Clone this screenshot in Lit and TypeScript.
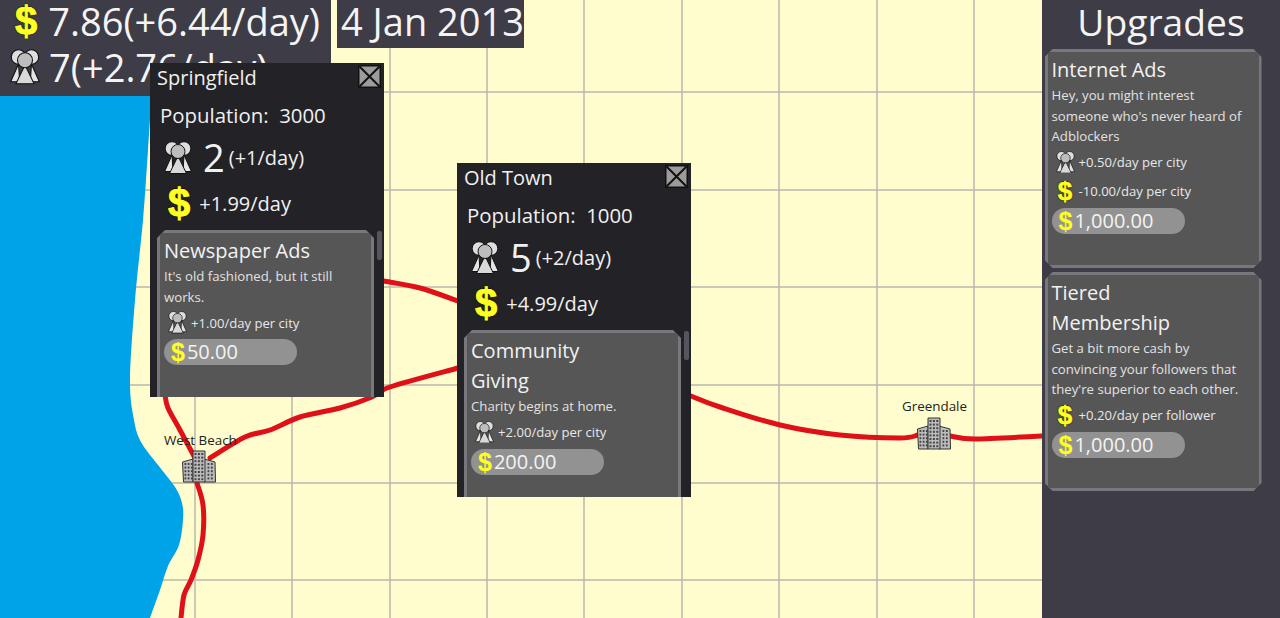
import { LitElement, html, css, svg } from "lit";
import { customElement } from "lit/decorators.js";

const people = (w: number) => html`<svg class="ico" width=${w} height=${w * 33 / 28} viewBox="0 0 28 33">
  <g fill="#cfcfcf" stroke="#111" stroke-width="1" stroke-linejoin="round">
    <circle cx="8" cy="7.5" r="6.8" fill="#dedede" /><circle cx="20" cy="7.5" r="6.8" fill="#dedede" />
    <path d="M8 14 L.6 30.5 H9 Z" fill="#e4e4e4" /><path d="M20 14 L27.4 30.5 H19 Z" fill="#e4e4e4" />
    <path d="M14 15 L5.5 32.5 H22.5 Z" fill="#d8d8d8" />
    <circle cx="14" cy="10.5" r="7" fill="#bdbdbd" />
  </g></svg>`;

const W = 1042, H = 618;
const gridX = [195, 292, 390, 487, 584, 682, 779, 877, 974];
const gridY = [92, 190, 287, 385, 483, 580];

/* Catmull-Rom through points, so the coast and the roads run as hand-drawn curves */
const smooth = (p: number[][]) => {
  let d = `M${p[0][0]} ${p[0][1]}`;
  for (let i = 0; i < p.length - 1; i++) {
    const a = p[Math.max(i - 1, 0)], b = p[i], c = p[i + 1], e = p[Math.min(i + 2, p.length - 1)];
    d += ` C${b[0] + (c[0] - a[0]) / 6} ${b[1] + (c[1] - a[1]) / 6} ${c[0] - (e[0] - b[0]) / 6} ${c[1] - (e[1] - b[1]) / 6} ${c[0]} ${c[1]}`;
  }
  return d;
};

const coast = smooth([[152, 90], [148, 150], [143, 220], [135, 300], [130, 380], [134, 420], [141, 442], [158, 465], [175, 487], [182, 503], [183, 520], [179, 545], [168, 566], [160, 590], [150, 618]]);

const roads = [
  [[165, 395], [168, 408], [180, 430], [195, 458]],
  [[197, 483], [203, 505], [203, 535], [198, 560], [191, 580], [184, 595], [181, 618]],
  [[210, 458], [245, 437], [270, 430], [300, 417], [340, 408], [372, 397], [390, 387], [458, 368]],
  [[384, 281], [420, 288], [458, 301]],
  [[691, 396], [720, 407], [780, 425], [840, 435], [900, 438], [918, 435]],
  [[950, 436], [975, 439], [1042, 436]],
];

const building = (x: number, y: number) => {
  const wins = [];
  for (let r = 0; r < 8; r++) for (let c = 0; c < 3; c++) wins.push(svg`<rect x=${x + 12.5 + c * 3.4} y=${y + 3 + r * 3.6} width="2" height="2" fill="#444" />`);
  for (let r = 0; r < 5; r++) for (let c = 0; c < 3; c++) {
    wins.push(svg`<rect x=${x + 2.5 + c * 3.2} y=${y + 13 + r * 3.6} width="1.8" height="2" fill="#444" />`);
    if (c < 2) wins.push(svg`<rect x=${x + 25.5 + c * 3.4} y=${y + 13 + r * 3.6} width="1.8" height="2" fill="#444" />`);
  }
  return svg`<g stroke="#333" stroke-width="1" fill="#bdbdbd">
    <path d=${`M${x + .5} ${y + 12} L${x + 11} ${y + 9} V${y + 32} H${x + 1.5} Z`} />
    <path d=${`M${x + 22} ${y + 9} L${x + 33} ${y + 12} L${x + 33.5} ${y + 32} H${x + 22} Z`} />
    <path d=${`M${x + 11} ${y + 1} H${x + 23} V${y + 32} H${x + 11} Z`} />
  </g>${wins}`;
};

const dollarStyle = css`
  .dollar { font-family: "Liberation Sans", sans-serif; font-weight: 700; color: #ffff22; font-size: 40px; line-height: 40px; -webkit-text-stroke: .9px #ffff22; text-shadow: 0 0 1.5px #000, 0 0 1.5px #000; }
  .ico { display: block; }
`;

interface Upg { title: string[]; desc: string; stats: [string, string][]; price: string; }

@customElement("upgrade-card")
class UpgradeCard extends LitElement {
  static properties = { data: { attribute: false }, cut: { type: Boolean, reflect: true } };
  declare data: Upg; declare cut: boolean;
  static styles = [dollarStyle, css`
    :host { display: block; background: #77777c; padding: 3px; clip-path: polygon(8px 0, calc(100% - 8px) 0, 100% 8px, 100% calc(100% - 8px), calc(100% - 8px) 100%, 8px 100%, 0 calc(100% - 8px), 0 8px); box-sizing: border-box; }
    :host([cut]) { clip-path: polygon(8px 0, calc(100% - 8px) 0, 100% 8px, 100% 100%, 0 100%, 0 8px); padding-bottom: 0; }
    .in { background: #565656; height: 100%; box-sizing: border-box; padding: 3px 4px 0 4px; color: #efefef; }
    .t { font-size: 20px; line-height: 30px; color: #f2f2f2; }
    .d { font-size: 13.2px; line-height: 20.5px; color: #e2e2e2; margin-bottom: 1px; }
    .s { display: flex; align-items: center; height: 29px; font-size: 13.1px; color: #e8e8e8; padding-left: 2px; gap: 2px; }
    .s .i { width: 23px; display: flex; justify-content: center; }
    .s .dollar { font-size: 26px; line-height: 24px; -webkit-text-stroke: .6px #ffff22; }
    .p { display: flex; align-items: center; width: 133px; height: 26px; border-radius: 13px; background: #929292; font-size: 20px; color: #f4f4f4; padding-left: 7px; box-sizing: border-box; margin-top: 2px; line-height: 26px; }
    .p .dollar { font-size: 25px; line-height: 26px; -webkit-text-stroke: 0; margin-right: 2px; text-shadow: none; }
  `];
  render() {
    const u = this.data;
    return html`<div class="in">
      ${u.title.map(t => html`<div class="t">${t}</div>`)}
      <div class="d">${u.desc}</div>
      ${u.stats.map(([k, v]) => html`<div class="s"><span class="i">${k === "p" ? people(19) : html`<span class="dollar">$</span>`}</span><span>${v}</span></div>`)}
      <div class="p"><span class="dollar">$</span>${u.price}</div>
    </div>`;
  }
}

@customElement("city-window")
class CityWindow extends LitElement {
  static properties = { name: {}, pop: {}, num: {}, rate: {}, cash: {}, upg: { attribute: false } };
  declare name: string; declare pop: string; declare num: string; declare rate: string; declare cash: string; declare upg: Upg;
  static styles = [dollarStyle, css`
    :host { display: flex; flex-direction: column; height: 334px; background: #232227; color: #f0f0f0; overflow: hidden; font-size: 20px; box-sizing: border-box; }
    .head { display: flex; justify-content: space-between; align-items: flex-start; height: 30px; padding: 0 3px 0 7px; flex: none; line-height: 29px; }
    .x { display: block; margin-top: 2px; }
    .pop { padding: 7px 0 0 10px; height: 30px; line-height: 30px; flex: none; white-space: pre; font-size: 20.4px; }
    .row { display: flex; align-items: center; flex: none; }
    .r1 { height: 50px; padding: 0 0 0 14px; margin-top: 2px; }
    .big { font-size: 38px; margin: 0 4px 0 11px; line-height: 50px; }
    .r2 { height: 40px; margin-top: 1px; padding-left: 18px; gap: 9px; }
    .body { display: flex; flex: 1; margin-top: 7px; padding: 0 10px 0 7px; min-height: 0; position: relative; }
    upgrade-card { flex: 1; height: 100%; }
    .bar { position: absolute; right: 2px; top: 1px; width: 5px; height: 29px; background: #55555e; border-radius: 2px; }
  `];
  render() {
    return html`
      <div class="head"><span>${this.name}</span>
        <svg class="x" width="23" height="23" viewBox="0 0 23 23"><rect x=".75" y=".75" width="21.5" height="21.5" fill="#9c9c9c" stroke="#111" stroke-width="1.5"/><path d="M1.5 1.5 L21.5 21.5 M21.5 1.5 L1.5 21.5" stroke="#111" stroke-width="2"/></svg>
      </div>
      <div class="pop">Population:  ${this.pop}</div>
      <div class="row r1">${people(28)}<span class="big">${this.num}</span><span>${this.rate}</span></div>
      <div class="row r2"><span class="dollar">$</span><span>${this.cash}</span></div>
      <div class="body"><upgrade-card cut .data=${this.upg}></upgrade-card><div class="bar"></div></div>`;
  }
}

@customElement("app-root")
class AppRoot extends LitElement {
  static styles = [dollarStyle, css`
    :host { display: block; width: 1280px; height: 618px; font-family: "Open Sans", sans-serif; overflow: hidden; }
    .page { display: flex; width: 1280px; height: 618px; position: relative; background: #fffdcd; overflow: hidden; }
    .map { width: 1042px; height: 618px; flex: none; display: block; }
    .map text { font-family: "Open Sans", sans-serif; font-size: 13.4px; fill: #222; }
    .side { flex: 1; background: #3d3c47; display: flex; flex-direction: column; align-items: center; min-width: 0; }
    .side h1 { margin: 0; font-weight: 400; font-size: 37.2px; line-height: 44px; color: #f4f4f4; height: 49px; flex: none; white-space: nowrap; }
    .side upgrade-card { width: 217px; margin-left: -16px; margin-bottom: 4px; flex: none; }
    .u1 { height: 219px; } .u2 { height: 219px; }
    .stats, .date { position: absolute; background: #3d3c47; color: #f4f4f4; font-size: 38px; white-space: nowrap; }
    .stats { left: 0; top: 0; width: 331px; height: 96px; padding-left: 15px; box-sizing: border-box; }
    .date { left: 337px; top: 0; height: 48px; width: 187px; padding-left: 4px; box-sizing: border-box; line-height: 43px; }
    .line { display: flex; align-items: center; }
    .line.l1 { height: 42px; line-height: 42px; gap: 11px; }
    .line.l2 { height: 48px; line-height: 48px; margin-left: -5px; gap: 9px; margin-top: 1px; }
    .w1 { position: absolute; left: 150px; top: 63px; width: 234px; }
    .w2 { position: absolute; left: 457px; top: 163px; width: 234px; }
  `];
  render() {
    return html`<div class="page">
      <svg class="map" width=${W} height=${H} viewBox="0 0 ${W} ${H}">
        <rect width=${W} height=${H} fill="#fffdcd"/>
        ${gridX.map(x => svg`<line x1=${x} x2=${x} y1="0" y2=${H} stroke="#b7b7ae" stroke-width="1.5"/>`)}
        ${gridY.map(y => svg`<line x1="0" x2=${W} y1=${y} y2=${y} stroke="#b7b7ae" stroke-width="1.5"/>`)}
        <path fill="#00a2e8" d="${coast} H0 V90 Z"/>
        <g fill="none" stroke="#e01018" stroke-width="5" stroke-linecap="round" stroke-linejoin="round">
          ${roads.map(r => svg`<path d=${smooth(r)}/>`)}
        </g>
        <text x="164" y="445">West Beach</text>
        <text x="902" y="411">Greendale</text>
        ${building(182, 450)}
        ${building(917, 417)}
      </svg>
      <div class="side">
        <h1>Upgrades</h1>
        <upgrade-card class="u1" .data=${{ title: ["Internet Ads"], desc: "Hey, you might interest someone who's never heard of Adblockers", stats: [["p", "+0.50/day per city"], ["d", "-10.00/day per city"]], price: "1,000.00" }}></upgrade-card>
        <upgrade-card class="u2" .data=${{ title: ["Tiered", "Membership"], desc: "Get a bit more cash by convincing your followers that they're superior to each other.", stats: [["d", "+0.20/day per follower"]], price: "1,000.00" }}></upgrade-card>
      </div>
      <div class="stats">
        <div class="line l1"><span class="dollar">$</span><span>7.86(+6.44/day)</span></div>
        <div class="line l2">${people(30)}<span>7(+2.76/day)</span></div>
      </div>
      <div class="date">4 Jan 2013</div>
      <city-window class="w1" name="Springfield" pop="3000" num="2" rate="(+1/day)" cash="+1.99/day"
        .upg=${{ title: ["Newspaper Ads"], desc: "It's old fashioned, but it still works.", stats: [["p", "+1.00/day per city"]], price: "50.00" }}></city-window>
      <city-window class="w2" name="Old Town" pop="1000" num="5" rate="(+2/day)" cash="+4.99/day"
        .upg=${{ title: ["Community", "Giving"], desc: "Charity begins at home.", stats: [["p", "+2.00/day per city"]], price: "200.00" }}></city-window>
    </div>`;
  }
}
